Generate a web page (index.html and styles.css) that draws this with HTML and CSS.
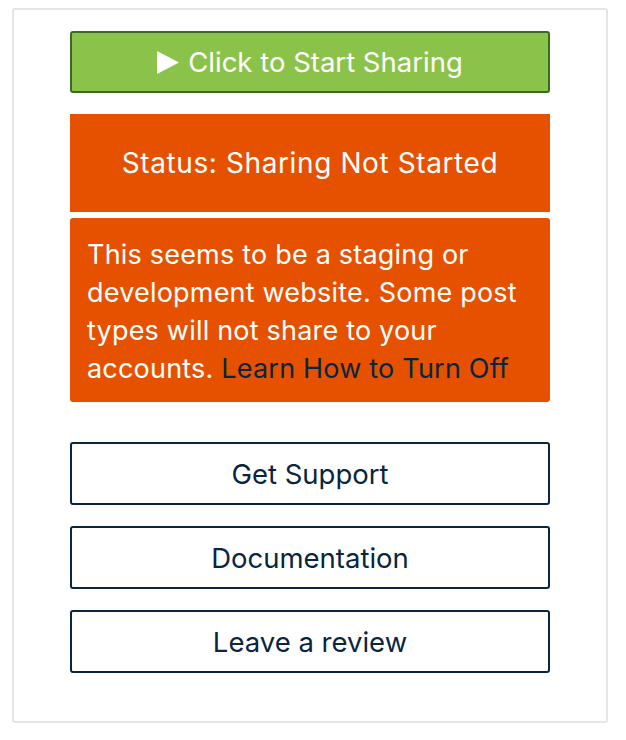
FILE: index.html
```html
<!DOCTYPE html>
<html>
<head>
<meta charset="utf-8">
<link rel="stylesheet" href="styles.css">
</head>
<body>
<div class="card">
  <button class="start-btn" type="button">
    <svg class="play" width="22" height="23" viewBox="0 0 22 23"><polygon points="0,0 22,11.5 0,23" fill="#ffffff"/></svg>
    <span>Click to Start Sharing</span>
  </button>
  <div class="status">Status: Sharing Not Started</div>
  <div class="warning">This seems to be a staging or development website. Some post types will not share to your accounts. <a class="warn-link" href="#">Learn How to Turn Off</a></div>
  <div class="links">
    <a class="outline-btn" href="#">Get Support</a>
    <a class="outline-btn" href="#">Documentation</a>
    <a class="outline-btn" href="#">Leave a review</a>
  </div>
</div>
</body>
</html>
```
FILE: styles.css
```css
html, body {
  margin: 0;
  padding: 0;
  background: #ffffff;
}
body {
  font-family: Inter, "Noto Sans", sans-serif;
  color: #0a2540;
}
.card {
  box-sizing: border-box;
  margin: 8px 0 0 12px;
  width: 596px;
  height: 715px;
  border: 2px solid #e4e5e8;
  border-radius: 3px;
  background: #ffffff;
  padding: 21px 56px 0 56px;
  display: flex;
  flex-direction: column;
}
.start-btn {
  box-sizing: border-box;
  width: 480px;
  height: 62px;
  background: #8bc34a;
  border: 2px solid #3b6b22;
  border-radius: 3px;
  color: #ffffff;
  font-family: inherit;
  font-size: 27.5px;
  display: flex;
  align-items: center;
  justify-content: center;
  gap: 9px;
  padding: 0;
  cursor: pointer;
}
.play {
  display: block;
  flex: none;
}
.status {
  margin-top: 21px;
  height: 98px;
  background: #e65100;
  color: #ffffff;
  font-size: 28px;
  letter-spacing: 0.6px;
  display: flex;
  align-items: center;
  justify-content: center;
}
.warning {
  box-sizing: border-box;
  margin-top: 6px;
  height: 184px;
  background: #e65100;
  border-radius: 3px;
  color: #ffffff;
  font-size: 27px;
  letter-spacing: 0.2px;
  line-height: 38px;
  padding: 18px 17px 14px 17px;
}
.warn-link {
  color: #0a2540;
  text-decoration: none;
}
.links {
  margin-top: 40px;
  display: flex;
  flex-direction: column;
  gap: 21px;
}
.outline-btn {
  box-sizing: border-box;
  height: 63px;
  border: 2px solid #0a2540;
  border-radius: 3px;
  background: #ffffff;
  color: #0a2540;
  font-size: 27.5px;
  text-decoration: none;
  display: flex;
  align-items: center;
  justify-content: center;
}
```
